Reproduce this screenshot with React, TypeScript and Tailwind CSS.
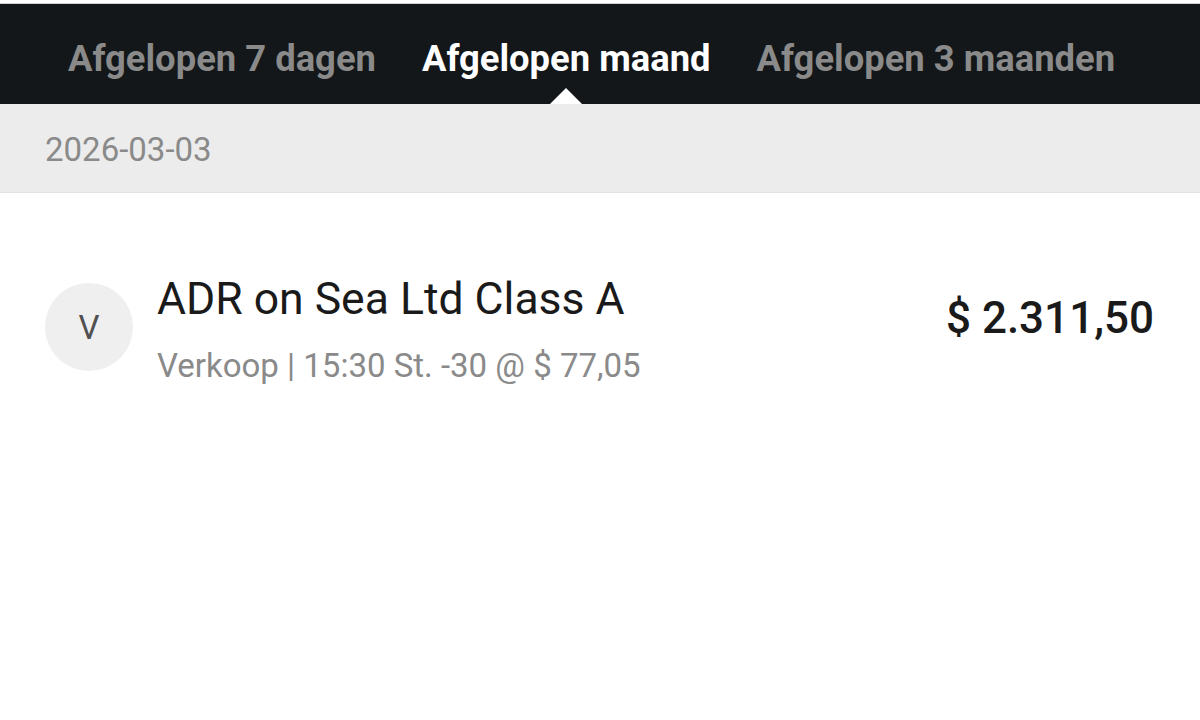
import React from 'react';

const tabs = ['Afgelopen 7 dagen', 'Afgelopen maand', 'Afgelopen 3 maanden'];
const active = 1;

export default function App() {
  return (
    <div className="w-[1200px] h-[720px] bg-white overflow-hidden" style={{ fontFamily: 'Roboto, "Noto Sans", sans-serif' }}>
      {/* top strip */}
      <div className="h-[4px] bg-white border-b border-[#cfcfcf]" />

      {/* period tabs */}
      <div className="h-[100px] bg-[#131719] flex items-stretch pl-[68px] gap-[46px]">
        {tabs.map((label, i) => (
          <div key={label} className="relative flex items-center pt-[11px]">
            <span
              className={`text-[36.4px] font-bold leading-none ${i === active ? 'text-white' : 'text-[#8a8a8a]'}`}
            >
              {label}
            </span>
            {i === active && (
              <div className="absolute bottom-0 left-1/2 -translate-x-1/2 w-0 h-0 border-l-[16px] border-r-[16px] border-b-[16px] border-l-transparent border-r-transparent border-b-white" />
            )}
          </div>
        ))}
      </div>

      {/* date header */}
      <div className="h-[89px] bg-[#ececec] border-b border-[#e2e2e2] flex items-center pl-[45px] pt-[3px]">
        <span className="text-[33px] leading-none text-[#8a8a8a]">2026-03-03</span>
      </div>

      {/* transaction row */}
      <div className="flex items-start pl-[45px] pr-[46px] pt-[84px]">
        <div className="w-[88px] h-[88px] mt-[6px] rounded-full bg-[#efefef] flex items-center justify-center shrink-0">
          <span className="text-[33px] leading-none text-[#505050]">V</span>
        </div>
        <div className="ml-[24px] flex-1 flex flex-col">
          <span className="text-[44.5px] text-[#1a1a1a] leading-none">ADR on Sea Ltd Class A</span>
          <span className="text-[33px] text-[#8a8a8a] leading-none mt-[27px]">Verkoop | 15:30 St. -30 @ $ 77,05</span>
        </div>
        <span className="text-[44px] font-medium leading-none text-[#1a1a1a] mt-[19px]">$ 2.311,50</span>
      </div>
    </div>
  );
}
